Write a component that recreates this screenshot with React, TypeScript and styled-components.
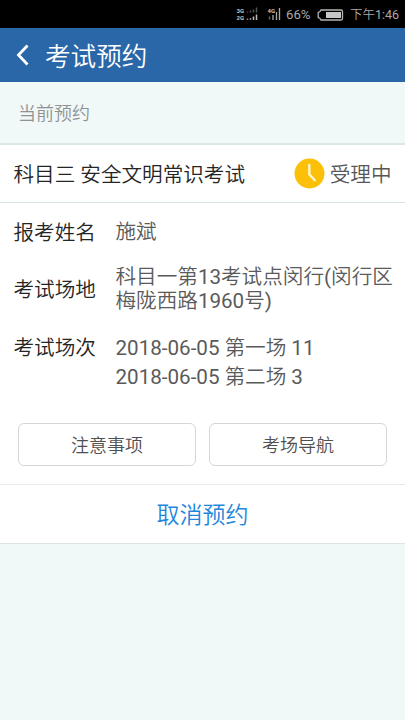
import React from "react";
import styled, { createGlobalStyle } from "styled-components";

const GlobalStyle = createGlobalStyle`
  * { box-sizing: border-box; }
  body { margin: 0; background: #f0f9f8; }
`;

const Screen = styled.div`
  display: flex;
  flex-direction: column;
  width: 405px;
  height: 720px;
  overflow: hidden;
  background: #f0f9f8;
  color: #252525;
  font-family: Roboto, "Noto Sans CJK SC", sans-serif;
  font-size: 20.6px;
  font-weight: 350;
`;

const StatusBar = styled.div`
  display: flex;
  align-items: center;
  flex: none;
  height: 28px;
  padding: 1px 6px 0 236px;
  background: #000;
  color: #a8a8a8;
  font-size: 12.5px;
  line-height: 26px;
  white-space: nowrap;
`;

const Percent = styled.span`
  margin-left: 5px;
  width: 31px;
  padding-top: 1px;
  font-size: 13.2px;
  font-weight: 400;
`;

const Clock = styled.span`
  margin-left: auto;
  padding-top: 1px;
`;

const Header = styled.header`
  display: flex;
  align-items: center;
  flex: none;
  height: 54px;
  padding-left: 16px;
  background: #2a67a9;
  color: #fff;
`;

const Title = styled.h1`
  margin: 0 0 0 15px;
  padding-top: 4px;
  font-size: 25.6px;
  font-weight: 350;
  line-height: 50px;
`;

const SectionLabel = styled.div`
  flex: none;
  height: 63px;
  padding: 1px 0 0 18px;
  border-bottom: 2px solid #dde6e6;
  color: #8f9292;
  font-size: 18px;
  line-height: 61px;
`;

const Card = styled.section`
  flex: none;
  background: #fff;
  border-bottom: 1px solid #dce4e4;
`;

const CardHead = styled.div`
  display: flex;
  align-items: center;
  justify-content: space-between;
  height: 58px;
  padding: 0 13.5px;
  border-bottom: 1px solid #d8e4e2;
`;

const Status = styled.div`
  display: flex;
  align-items: center;
  gap: 5px;
  color: #575757;
`;

const Label = styled.span`
  padding-top: 2px;
  line-height: 24px;
`;

const Row = styled.div<{ $height: number }>`
  display: grid;
  grid-template-columns: 102px 1fr;
  align-items: center;
  height: ${(p) => p.$height}px;
  padding-left: 13.5px;
`;

const Value = styled.div<{ $leading?: number }>`
  color: #5a5a5a;
  line-height: ${(p) => p.$leading ?? 24}px;
  white-space: nowrap;
`;

const Sessions = styled(Row)`
  align-items: start;
  padding-top: 16px;
`;

const Latin = styled.span`
  font-weight: 400;
`;

const Actions = styled.div`
  display: grid;
  grid-template-columns: 1fr 1fr;
  gap: 13px;
  height: 81px;
  padding: 19px 18px;
  border-bottom: 1px solid #e9e9e9;
`;

const OutlineButton = styled.button`
  height: 43px;
  padding: 0 0 2px;
  background: #fff;
  border: 1px solid #d6d6d6;
  border-radius: 6px;
  color: #505050;
  font: inherit;
  font-size: 18px;
`;

const CancelButton = styled.button`
  display: block;
  width: 100%;
  height: 58px;
  padding: 0 0 2px;
  background: #fff;
  border: 0;
  color: #1f87da;
  font: inherit;
  font-size: 23px;
`;

const Drawing = styled.svg`
  display: block;
  flex: none;
`;

const NetLabel = styled.text`
  font-family: Roboto, sans-serif;
  font-size: 6px;
  font-weight: 700;
  fill: #c4c4c4;
`;

function Signals() {
  return (
    <Drawing width="45" height="16" viewBox="0 0 45 16">
      <NetLabel x="0.5" y="6">3G</NetLabel>
      <NetLabel x="0.5" y="13">2G</NetLabel>
      <path d="M11.5 4.5v1M14.5 3.5v2M17.5 2.5v3M20.5 0.5v5" stroke="#555" strokeWidth="1.5" />
      <path d="M11.5 11.5v1.5M14.5 11v2" stroke="#888" strokeWidth="1.5" />
      <path d="M17.5 9.5V13M20.5 7.5V13" stroke="#bbb" strokeWidth="1.5" />
      <NetLabel x="31.5" y="6">4G</NetLabel>
      <path d="M33.5 9.5v3" stroke="#666" strokeWidth="1.5" />
      <path d="M37 8v5M40.5 5v8M43.5 1v12" stroke="#aaa" strokeWidth="1.3" />
    </Drawing>
  );
}

function Battery() {
  return (
    <Drawing width="27" height="12" viewBox="0 0 27 12">
      <path d="M4 1H24a1.5 1.5 0 0 1 1.5 1.5v7A1.5 1.5 0 0 1 24 11H4L2.8 9.2 1.2 8.6V3.4L2.8 2.8Z" fill="none" stroke="#b5b5b5" strokeWidth="1.3" />
      <rect x="9" y="3" width="15" height="6" fill="#c8c8c8" />
    </Drawing>
  );
}

function BackArrow() {
  return (
    <Drawing width="14" height="24" viewBox="0 0 14 24">
      <path d="M11.5 2.5 2.5 12l9 9.5" fill="none" stroke="#fff" strokeWidth="2.8" />
    </Drawing>
  );
}

function PendingIcon() {
  return (
    <Drawing width="31" height="31" viewBox="0 0 31 31">
      <circle cx="15.5" cy="15.5" r="15" fill="#fdc008" />
      <path d="M15.3 6.8v9.6l5.5 5.8" fill="none" stroke="#fff8d8" strokeWidth="2.3" strokeLinecap="round" strokeLinejoin="round" />
    </Drawing>
  );
}

export default function App() {
  return (
    <Screen>
      <GlobalStyle />
      <StatusBar>
        <Signals />
        <Percent>66%</Percent>
        <Battery />
        <Clock>下午<Latin>1:46</Latin></Clock>
      </StatusBar>
      <Header>
        <BackArrow />
        <Title>考试预约</Title>
      </Header>
      <SectionLabel>当前预约</SectionLabel>
      <Card>
        <CardHead>
          <Label>科目三 安全文明常识考试</Label>
          <Status>
            <PendingIcon />
            <Label>受理中</Label>
          </Status>
        </CardHead>
        <Row $height={57}>
          <Label>报考姓名</Label>
          <Value>施斌</Value>
        </Row>
        <Row $height={58}>
          <Label>考试场地</Label>
          <Value>
            科目一第<Latin>13</Latin>考试点闵行<Latin>(</Latin>闵行区
            <br />
            梅陇西路<Latin>1960</Latin>号<Latin>)</Latin>
          </Value>
        </Row>
        <Sessions $height={86}>
          <Label>考试场次</Label>
          <Value $leading={29}>
            <Latin>2018-06-05</Latin> 第一场 <Latin>11</Latin>
            <br />
            <Latin>2018-06-05</Latin> 第二场 <Latin>3</Latin>
          </Value>
        </Sessions>
        <Actions>
          <OutlineButton>注意事项</OutlineButton>
          <OutlineButton>考场导航</OutlineButton>
        </Actions>
        <CancelButton>取消预约</CancelButton>
      </Card>
    </Screen>
  );
}
